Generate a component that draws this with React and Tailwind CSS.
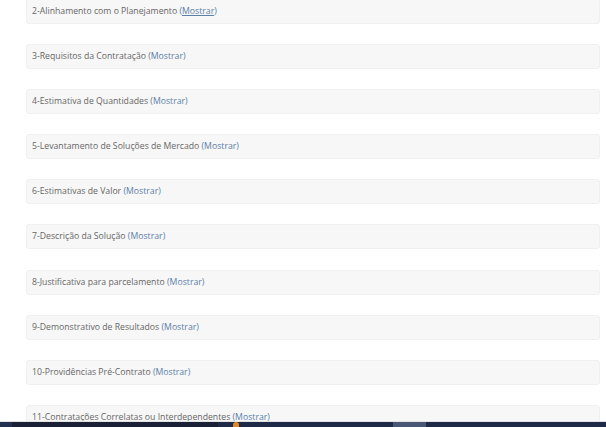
import React from "react";

const sections = [
  "2-Alinhamento com o Planejamento",
  "3-Requisitos da Contratação",
  "4-Estimativa de Quantidades",
  "5-Levantamento de Soluções de Mercado",
  "6-Estimativas de Valor",
  "7-Descrição da Solução",
  "8-Justificativa para parcelamento",
  "9-Demonstrativo de Resultados",
  "10-Providências Pré-Contrato",
  "11-Contratações Correlatas ou Interdependentes",
];

export default function App() {
  return (
    <div
      className="h-[427px] w-[606px] overflow-hidden bg-white flex flex-col"
      style={{ fontFamily: '"Open Sans", "Noto Sans", sans-serif' }}
    >
      <div className="h-[422px] overflow-hidden border-b border-[#e2e2e2]">
        <div className="-mt-[1px] ml-[26px] w-[574px] flex flex-col gap-[20.1px]">
          {sections.map((name, i) => (
            <div
              key={name}
              className="h-[25px] shrink-0 flex items-center pl-[5px] bg-[#f7f7f7] border border-[#f0f0f0] rounded-[3px] text-[8.7px] text-[#666666]"
            >
              <span>
                {name}{" "}
                <span className="text-[#5b80a8]">
                  (<span className={i === 0 ? "underline" : ""}>Mostrar</span>)
                </span>
              </span>
            </div>
          ))}
        </div>
      </div>
      <div className="h-[5px] flex bg-[#1e2a47]">
        <div className="w-[12px] bg-[#23304f]" />
        <div className="w-[206px] bg-[#1a2035]" />
        <div className="w-[15px]" />
        <div className="w-[6px] h-[5px] rounded-t-full bg-[#e08a2c]" />
        <div className="w-[154px]" />
        <div className="w-[33px] bg-[#4a5675]" />
      </div>
    </div>
  );
}
